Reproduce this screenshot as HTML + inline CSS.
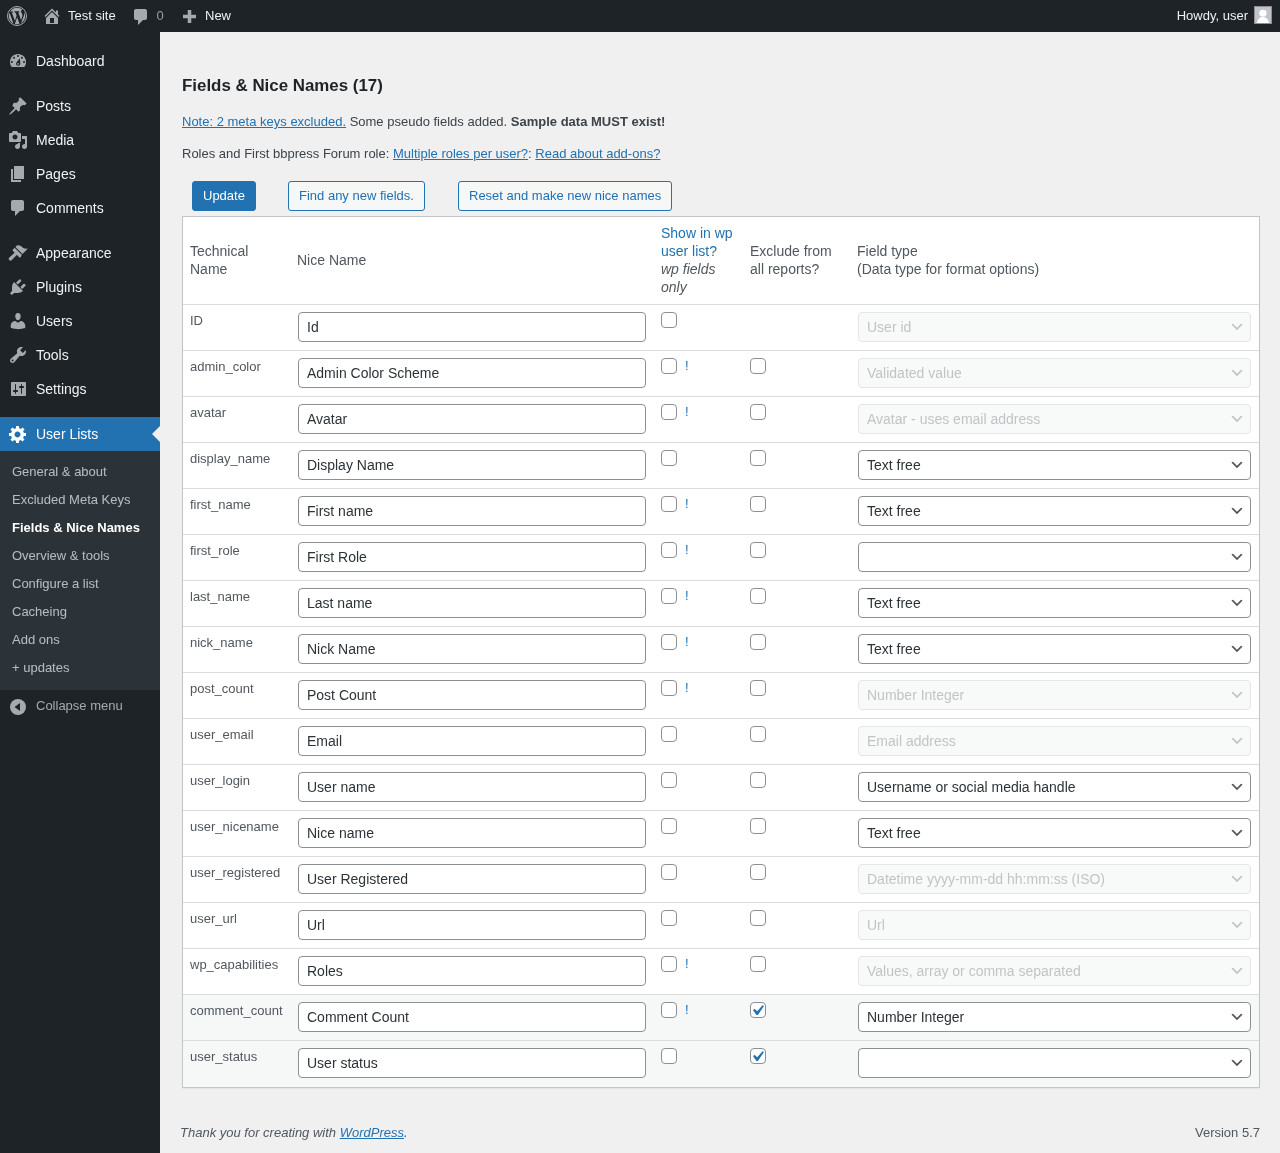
<!DOCTYPE html>
<html><head><meta charset="utf-8">
<style>
*{box-sizing:border-box;margin:0;padding:0}
html,body{width:1280px;height:1153px;overflow:hidden}
body{background:#f0f0f1;font-family:"Liberation Sans",sans-serif;font-size:13px;line-height:1.4;color:#3c434a;position:relative}
a{color:#2271b1;text-decoration:underline}
#bar{position:absolute;left:0;top:0;width:1280px;height:32px;background:#1d2327;color:#f0f0f1;font-size:13px;line-height:32px}
#bar .t{position:absolute;top:0;white-space:nowrap}
#bar svg{position:absolute}
#side{position:absolute;left:0;top:32px;width:160px;height:1121px;background:#1d2327}
.mi{position:absolute;left:0;width:160px;height:34px;color:#f0f0f1;font-size:14px;line-height:18px}
.mi .l{position:absolute;left:36px;top:8px;white-space:nowrap}
.mi svg{position:absolute;left:8px;top:7px}
.mi.cur{background:#2271b1;color:#fff}
#sub{position:absolute;left:0;width:160px;background:#2c3338}
.si{position:absolute;left:12px;color:rgba(240,246,252,.7);font-size:13px;line-height:18px;white-space:nowrap}
.si.b{color:#fff;font-weight:bold}
#main{position:absolute;left:160px;top:32px;width:1120px;height:1121px}
h2{position:absolute;left:22px;font-size:16.9px;font-weight:600;color:#1d2327;line-height:1.3;white-space:nowrap}
.p{position:absolute;left:22px;white-space:nowrap}
.btn{position:absolute;height:30px;border:1px solid #2271b1;border-radius:3px;background:#f6f7f7;color:#2271b1;font-size:13px;line-height:28px;padding:0 10px;white-space:nowrap}
.btn.pri{background:#2271b1;color:#fff}
#tbl{position:absolute;left:182px;top:216px;width:1078px;height:872px;background:#fff;border:1px solid #c3c4c7;box-shadow:0 1px 1px rgba(0,0,0,.04)}
.hd{position:absolute;white-space:nowrap;line-height:18px;font-size:14px;color:#50575e}
.row{position:absolute;left:0;width:1076px;height:46px;border-top:1px solid #dcdcde}
.row.gray{background:#f6f7f7;height:47px}
.tech{position:absolute;left:7px;top:7px;line-height:18px;font-size:13px;color:#50575e}
.inp{position:absolute;left:115px;top:7px;width:348px;height:30px;border:1px solid #8c8f94;border-radius:4px;background:#fff;font-size:14px;line-height:28px;padding-left:8px;color:#2c3338;white-space:nowrap}
.cb{position:absolute;top:7px;width:16px;height:16px;border:1px solid #8c8f94;border-radius:4px;background:#fff}
.cb1{left:478px}
.cb2{left:567px}
.tick{position:absolute;left:-4px;top:-3px}
.bang{position:absolute;left:502px;top:6px;color:#2271b1;font-size:13px;line-height:18px}
.sel{position:absolute;left:675px;top:7px;width:393px;height:30px;border:1px solid #8c8f94;border-radius:4px;background:#fff;font-size:14px;line-height:28px;padding-left:8px;color:#2c3338;white-space:nowrap}
.sel.dis{border-color:#dcdcde;background:#f6f7f7;color:#a7aaad;opacity:.7}
.chev{position:absolute;right:5px;top:5.8px}
#foot{position:absolute;left:180px;top:1123px;font-style:italic;color:#50575e;line-height:20px;white-space:nowrap}
#ver{position:absolute;right:20px;top:1123px;color:#50575e;line-height:20px}
</style></head><body>
<div id="wrap" style="position:absolute;left:0;top:0;width:1280px;height:1153px;will-change:transform">
<div id="bar">
 <svg style="left:7px;top:6px" width="20" height="20" viewBox="0 0 20 20"><circle cx="10" cy="10" r="9.500" fill="none" stroke="#a7aaad" stroke-width="1"/><path transform="translate(10 10) scale(.92) translate(-10 -10)" d="M7.780 15.370L4.370 6.220c.550-.020 1.170-.080 1.170-.080.500-.060.440-1.130-.060-1.110 0 0-1.450.110-2.370.110-.180 0-.370 0-.580-.010C4.120 2.690 6.870 1.110 10 1.110c2.330 0 4.450.870 6.050 2.340-.680-.110-1.650.390-1.650 1.580 0 .740.450 1.360.900 2.100.350.610.550 1.360.550 2.460 0 1.490-1.400 5-1.400 5l-3.030-8.370c.540-.020.820-.170.820-.170.500-.050.440-1.250-.060-1.220 0 0-1.440.120-2.380.120-.870 0-2.330-.120-2.330-.120-.500-.030-.560 1.200-.060 1.220l.920.080 1.260 3.410zM17.410 10c.240-.640.740-1.870.430-4.250.700 1.290 1.050 2.710 1.050 4.250 0 3.290-1.730 6.240-4.400 7.780.970-2.590 1.940-5.200 2.920-7.780zM6.100 18.090C3.120 16.650 1.110 13.530 1.110 10c0-1.300.230-2.480.720-3.590C3.250 10.300 4.670 14.200 6.100 18.090zm4.030-6.630l2.580 6.980c-.860.290-1.760.450-2.710.450-.790 0-1.570-.110-2.290-.330.810-2.380 1.620-4.740 2.420-7.100z" fill="#a7aaad"/></svg>
 <svg style="left:42px;top:6px" width="20" height="20" viewBox="0 0 20 20"><path d="M16 8.500l1.530 1.530-1.060 1.060L10 4.620l-6.470 6.470-1.060-1.060L10 2.500l4 4v-2h2v4zm-6-2.460l6 5.990V18H4v-5.970zM12 17v-5H8v5h4z" fill="#a7aaad" fill-rule="evenodd"/></svg>
 <div class="t" style="left:68px">Test site</div>
 <svg style="left:131px;top:7px" width="20" height="20" viewBox="0 0 20 20"><path d="M5 2h9c1.100 0 2 .900 2 2v7c0 1.100-.900 2-2 2h-2l-5 5v-5H5c-1.100 0-2-.900-2-2V4c0-1.100.900-2 2-2z" fill="#a7aaad"/></svg>
 <div class="t" style="left:156.5px;color:#9a9da1">0</div>
 <svg style="left:183px;top:10px" width="13" height="13" viewBox="0 0 13 13"><path d="M4.750 0h3.500v4.750H13v3.500H8.250V13h-3.500V8.250H0v-3.500h4.750z" fill="#a7aaad"/></svg>
 <div class="t" style="left:205px">New</div>
 <div class="t" style="right:32px">Howdy, user</div>
 <div style="position:absolute;left:1254px;top:6px;width:18px;height:18px;border:1px solid #8c8f94;background:#c3c4c7;overflow:hidden"><svg width="16" height="16" viewBox="0 0 16 16" style="position:absolute;left:0;top:0"><ellipse cx="7.9" cy="6.2" rx="3.7" ry="3.4" fill="#fff"/><path d="M1.800 16C2.300 12.600 4.600 10.100 7.900 9.700 11.200 10.100 13.500 12.600 14 16z" fill="#fff"/></svg></div>
</div>

<div id="side">
 <div class="mi" style="top:12px"><svg width="20" height="20" viewBox="0 0 20 20"><path d="M3.760 16h12.480c1.100-1.370 1.760-3.110 1.760-5 0-4.420-3.580-8-8-8s-8 3.580-8 8c0 1.890.660 3.630 1.760 5z" fill="#a7aaad"/><circle cx="3.900" cy="11" r="1" fill="#1d2327"/><circle cx="6" cy="6.700" r="1" fill="#1d2327"/><circle cx="10" cy="4.900" r="1" fill="#1d2327"/><circle cx="13.900" cy="6.700" r="1" fill="#1d2327"/><circle cx="16" cy="11" r="1" fill="#1d2327"/><path d="M11.800 7.300L12.300 13a2.100 2.100 0 11-4-1.200z" fill="#1d2327"/><circle cx="10" cy="12.900" r=".8" fill="#a7aaad"/></svg><span class="l">Dashboard</span></div>
 <div class="mi" style="top:57px"><svg width="20" height="20" viewBox="0 0 20 20"><path d="M10.440 3.020l1.820-1.820 6.360 6.350-1.830 1.820c-1.050-.68-2.480-.57-3.410.36l-.75.75c-.92.930-1.040 2.350-.35 3.410l-1.830 1.820-2.410-2.420-2.650 2.650c-.47.47-3.470 3.140-3.930 2.690-.46-.46 2.190-3.470 2.660-3.940l2.650-2.640-2.420-2.420L5.960 6.580c1.070.690 2.490.570 3.410-.350l.75-.75c.930-.930 1.050-2.360.320-3.460z" fill="#a7aaad"/></svg><span class="l">Posts</span></div>
 <div class="mi" style="top:91px"><svg width="20" height="20" viewBox="0 0 20 20"><path d="M13 11V4c0-.550-.450-1-1-1h-1.670L9 1H5L3.670 3H2c-.550 0-1 .450-1 1v7c0 .550.450 1 1 1h10c.550 0 1-.450 1-1zM7 4.500c1.380 0 2.500 1.120 2.500 2.500S8.380 9.500 7 9.500 4.500 8.380 4.500 7 5.620 4.500 7 4.500zM14 6h5v10.500c0 1.380-1.120 2.500-2.500 2.500S14 17.880 14 16.500s1.120-2.500 2.500-2.500c.170 0 .340.020.500.050V9h-3V6zm-4 8.050V13h2v3.500c0 1.380-1.120 2.500-2.500 2.500S7 17.880 7 16.500s1.120-2.500 2.500-2.500c.170 0 .340.020.500.050z" fill="#a7aaad" fill-rule="evenodd"/></svg><span class="l">Media</span></div>
 <div class="mi" style="top:125px"><svg width="20" height="20" viewBox="0 0 20 20"><path d="M6 15V2h10v13H6zm-1 1h8v2H3V5h2v11z" fill="#a7aaad"/></svg><span class="l">Pages</span></div>
 <div class="mi" style="top:159px"><svg width="20" height="20" viewBox="0 0 20 20"><path d="M5 2h9c1.100 0 2 .900 2 2v7c0 1.100-.900 2-2 2h-2l-5 5v-5H5c-1.100 0-2-.900-2-2V4c0-1.100.900-2 2-2z" fill="#a7aaad"/></svg><span class="l">Comments</span></div>
 <div class="mi" style="top:204px"><svg width="20" height="20" viewBox="0 0 20 20"><path d="M14.480 11.060L7.410 3.990l1.500-1.500c.500-.560 2.300-.470 3.510.320 1.210.800 1.430 1.280 2.910 2.100 1.180.640 2.450 1.260 4.660.630l-1.500 1.500z" fill="#a7aaad"/><path d="M13.770 11.770L6.700 4.700 4.930 6.470c-.390.390-.390 1.020 0 1.410l6.300 6.300c.390.390 1.020.390 1.410 0z" fill="#a7aaad"/><path d="M7.400 9.100L9.500 11.200L3.800 17.100A1.750 1.750 0 0 1 1.300 14.600Z" fill="#a7aaad"/></svg><span class="l">Appearance</span></div>
 <div class="mi" style="top:238px"><svg width="20" height="20" viewBox="0 0 20 20"><path d="M13.110 4.360L9.870 7.600 8 5.730l3.240-3.240c.350-.340 1.050-.200 1.560.310.500.500.650 1.210.310 1.560zm-8 1.770l.910-1.120 9.010 9.010-1.190.840c-.710.710-2.630 1.160-3.820 1.160H6.140L4.900 17.260c-.590.590-1.540.590-2.120 0-.590-.580-.590-1.530 0-2.120l1.240-1.240v-3.880c0-1.130.460-3.050 1.090-3.890zm7.260 3.970l3.240-3.240c.340-.350 1.050-.200 1.550.310.510.510.660 1.210.310 1.550l-3.240 3.250z" fill="#a7aaad"/></svg><span class="l">Plugins</span></div>
 <div class="mi" style="top:272px"><svg width="20" height="20" viewBox="0 0 20 20"><path d="M10 9.250c-2.270 0-2.730-3.440-2.730-3.440C7 4.020 7.820 2 9.970 2c2.160 0 2.980 2.020 2.710 3.810 0 0-.410 3.440-2.680 3.440zm0 2.570L12.720 10c2.390 0 4.520 2.330 4.520 4.530v2.490s-3.650 1.130-7.240 1.130c-3.650 0-7.240-1.130-7.240-1.130v-2.490c0-2.250 1.940-4.480 4.470-4.480z" fill="#a7aaad"/></svg><span class="l">Users</span></div>
 <div class="mi" style="top:306px"><svg width="20" height="20" viewBox="0 0 20 20"><path d="M16.680 9.770c-1.340 1.340-3.300 1.670-4.950.990l-5.410 6.520c-.990.990-2.590.990-3.580 0s-.990-2.590 0-3.570l6.520-5.420c-.680-1.650-.350-3.610.990-4.950 1.280-1.280 3.120-1.620 4.720-1.060l-2.890 2.890 2.820 2.820 2.860-2.870c.530 1.580.180 3.390-1.080 4.650zM3.810 16.210c.400.390 1.040.390 1.430 0 .400-.400.400-1.040 0-1.430-.390-.400-1.030-.400-1.430 0-.390.390-.390 1.030 0 1.430z" fill="#a7aaad" fill-rule="evenodd"/></svg><span class="l">Tools</span></div>
 <div class="mi" style="top:340px"><svg width="20" height="20" viewBox="0 0 20 20"><path d="M18 16V4c0-.550-.450-1-1-1H4c-.550 0-1 .450-1 1v12c0 .550.450 1 1 1h13c.550 0 1-.450 1-1zM8 11h1c.550 0 1 .450 1 1s-.450 1-1 1H8v1.500c0 .280-.220.500-.500.500s-.500-.220-.500-.500V13H6c-.550 0-1-.450-1-1s.450-1 1-1h1V5.500c0-.280.220-.500.500-.500s.500.220.500.500V11zm5-2h-1c-.550 0-1-.450-1-1s.450-1 1-1h1V5.500c0-.280.220-.500.500-.500s.500.220.500.500V7h1c.550 0 1 .450 1 1s-.450 1-1 1h-1v5.500c0 .280-.220.500-.500.500s-.500-.220-.500-.500V9z" fill="#a7aaad" fill-rule="evenodd"/></svg><span class="l">Settings</span></div>
 <div class="mi cur" style="top:385px"><svg width="20" height="20" viewBox="0 0 20 20"><path d="M18 12h-2.180c-.170.700-.440 1.350-.810 1.940l1.540 1.540-2.100 2.100-1.540-1.540c-.590.370-1.240.640-1.940.810V19H8v-2.180c-.700-.170-1.350-.440-1.940-.810l-1.540 1.540-2.100-2.100 1.540-1.540c-.370-.590-.640-1.240-.810-1.940H1V9h2.180c.170-.700.440-1.350.810-1.940L2.450 5.520l2.100-2.100 1.540 1.540c.590-.370 1.240-.640 1.940-.810V2h3v2.180c.700.170 1.350.440 1.940.810l1.540-1.540 2.100 2.100-1.540 1.540c.370.590.640 1.240.810 1.940H18v3zm-8.500 1.500c1.660 0 3-1.340 3-3s-1.340-3-3-3-3 1.340-3 3 1.340 3 3 3z" fill="#fff"/></svg><span class="l">User Lists</span>
  <svg style="left:152px;top:9px" width="8" height="16" viewBox="0 0 8 16"><path d="M8 0v16L0 8z" fill="#f0f0f1"/></svg></div>
 <div id="sub" style="top:419px;height:239px">
  <div class="si" style="top:12px">General &amp; about</div>
  <div class="si" style="top:40px">Excluded Meta Keys</div>
  <div class="si b" style="top:68px">Fields &amp; Nice Names</div>
  <div class="si" style="top:96px">Overview &amp; tools</div>
  <div class="si" style="top:124px">Configure a list</div>
  <div class="si" style="top:152px">Cacheing</div>
  <div class="si" style="top:180px">Add ons</div>
  <div class="si" style="top:208px">+ updates</div>
 </div>
 <div class="mi" style="top:657px;color:#a7aaad;font-size:13px"><svg style="top:8px" width="20" height="20" viewBox="0 0 20 20"><circle cx="10" cy="10" r="8" fill="#a7aaad"/><path d="M12 6v8L6.500 10z" fill="#1d2327"/></svg><span class="l">Collapse menu</span></div>
</div>

<h2 style="top:75px;left:182px">Fields &amp; Nice Names (17)</h2>
<div class="p" style="top:113px;left:182px"><a>Note: 2 meta keys excluded.</a> Some pseudo fields added. <b>Sample data MUST exist!</b></div>
<div class="p" style="top:145px;left:182px">Roles and First bbpress Forum role: <a>Multiple roles per user?</a>: <a>Read about add-ons?</a></div>
<div class="btn pri" style="left:192px;top:181px">Update</div>
<div class="btn" style="left:288px;top:181px">Find any new fields.</div>
<div class="btn" style="left:458px;top:181px">Reset and make new nice names</div>

<div id="tbl">
 <div class="hd" style="left:7px;top:25px">Technical<br>Name</div>
 <div class="hd" style="left:114px;top:34px">Nice Name</div>
 <div class="hd" style="left:478px;top:7px"><span style="color:#2271b1">Show in wp<br>user list?</span><br><i>wp fields<br>only</i></div>
 <div class="hd" style="left:567px;top:25px">Exclude from<br>all reports?</div>
 <div class="hd" style="left:674px;top:25px">Field type<br>(Data type for format options)</div>
<div class="row" style="top:87px"><div class="tech">ID</div><div class="inp">Id</div><div class="cb cb1"></div><div class="sel dis">User id<svg class="chev" width="16" height="16" viewBox="0 0 20 20"><path d="M5 6l5 5 5-5 2 1-7 7-7-7 2-1z" fill="#a7aaad"/></svg></div></div>
<div class="row" style="top:133px"><div class="tech">admin_color</div><div class="inp">Admin Color Scheme</div><div class="cb cb1"></div><div class="bang">!</div><div class="cb cb2"></div><div class="sel dis">Validated value<svg class="chev" width="16" height="16" viewBox="0 0 20 20"><path d="M5 6l5 5 5-5 2 1-7 7-7-7 2-1z" fill="#a7aaad"/></svg></div></div>
<div class="row" style="top:179px"><div class="tech">avatar</div><div class="inp">Avatar</div><div class="cb cb1"></div><div class="bang">!</div><div class="cb cb2"></div><div class="sel dis">Avatar - uses email address<svg class="chev" width="16" height="16" viewBox="0 0 20 20"><path d="M5 6l5 5 5-5 2 1-7 7-7-7 2-1z" fill="#a7aaad"/></svg></div></div>
<div class="row" style="top:225px"><div class="tech">display_name</div><div class="inp">Display Name</div><div class="cb cb1"></div><div class="cb cb2"></div><div class="sel">Text free<svg class="chev" width="16" height="16" viewBox="0 0 20 20"><path d="M5 6l5 5 5-5 2 1-7 7-7-7 2-1z" fill="#555"/></svg></div></div>
<div class="row" style="top:271px"><div class="tech">first_name</div><div class="inp">First name</div><div class="cb cb1"></div><div class="bang">!</div><div class="cb cb2"></div><div class="sel">Text free<svg class="chev" width="16" height="16" viewBox="0 0 20 20"><path d="M5 6l5 5 5-5 2 1-7 7-7-7 2-1z" fill="#555"/></svg></div></div>
<div class="row" style="top:317px"><div class="tech">first_role</div><div class="inp">First Role</div><div class="cb cb1"></div><div class="bang">!</div><div class="cb cb2"></div><div class="sel"><svg class="chev" width="16" height="16" viewBox="0 0 20 20"><path d="M5 6l5 5 5-5 2 1-7 7-7-7 2-1z" fill="#555"/></svg></div></div>
<div class="row" style="top:363px"><div class="tech">last_name</div><div class="inp">Last name</div><div class="cb cb1"></div><div class="bang">!</div><div class="cb cb2"></div><div class="sel">Text free<svg class="chev" width="16" height="16" viewBox="0 0 20 20"><path d="M5 6l5 5 5-5 2 1-7 7-7-7 2-1z" fill="#555"/></svg></div></div>
<div class="row" style="top:409px"><div class="tech">nick_name</div><div class="inp">Nick Name</div><div class="cb cb1"></div><div class="bang">!</div><div class="cb cb2"></div><div class="sel">Text free<svg class="chev" width="16" height="16" viewBox="0 0 20 20"><path d="M5 6l5 5 5-5 2 1-7 7-7-7 2-1z" fill="#555"/></svg></div></div>
<div class="row" style="top:455px"><div class="tech">post_count</div><div class="inp">Post Count</div><div class="cb cb1"></div><div class="bang">!</div><div class="cb cb2"></div><div class="sel dis">Number Integer<svg class="chev" width="16" height="16" viewBox="0 0 20 20"><path d="M5 6l5 5 5-5 2 1-7 7-7-7 2-1z" fill="#a7aaad"/></svg></div></div>
<div class="row" style="top:501px"><div class="tech">user_email</div><div class="inp">Email</div><div class="cb cb1"></div><div class="cb cb2"></div><div class="sel dis">Email address<svg class="chev" width="16" height="16" viewBox="0 0 20 20"><path d="M5 6l5 5 5-5 2 1-7 7-7-7 2-1z" fill="#a7aaad"/></svg></div></div>
<div class="row" style="top:547px"><div class="tech">user_login</div><div class="inp">User name</div><div class="cb cb1"></div><div class="cb cb2"></div><div class="sel">Username or social media handle<svg class="chev" width="16" height="16" viewBox="0 0 20 20"><path d="M5 6l5 5 5-5 2 1-7 7-7-7 2-1z" fill="#555"/></svg></div></div>
<div class="row" style="top:593px"><div class="tech">user_nicename</div><div class="inp">Nice name</div><div class="cb cb1"></div><div class="cb cb2"></div><div class="sel">Text free<svg class="chev" width="16" height="16" viewBox="0 0 20 20"><path d="M5 6l5 5 5-5 2 1-7 7-7-7 2-1z" fill="#555"/></svg></div></div>
<div class="row" style="top:639px"><div class="tech">user_registered</div><div class="inp">User Registered</div><div class="cb cb1"></div><div class="cb cb2"></div><div class="sel dis">Datetime yyyy-mm-dd hh:mm:ss (ISO)<svg class="chev" width="16" height="16" viewBox="0 0 20 20"><path d="M5 6l5 5 5-5 2 1-7 7-7-7 2-1z" fill="#a7aaad"/></svg></div></div>
<div class="row" style="top:685px"><div class="tech">user_url</div><div class="inp">Url</div><div class="cb cb1"></div><div class="cb cb2"></div><div class="sel dis">Url<svg class="chev" width="16" height="16" viewBox="0 0 20 20"><path d="M5 6l5 5 5-5 2 1-7 7-7-7 2-1z" fill="#a7aaad"/></svg></div></div>
<div class="row" style="top:731px"><div class="tech">wp_capabilities</div><div class="inp">Roles</div><div class="cb cb1"></div><div class="bang">!</div><div class="cb cb2"></div><div class="sel dis">Values, array or comma separated<svg class="chev" width="16" height="16" viewBox="0 0 20 20"><path d="M5 6l5 5 5-5 2 1-7 7-7-7 2-1z" fill="#a7aaad"/></svg></div></div>
<div class="row gray" style="top:777px"><div class="tech">comment_count</div><div class="inp">Comment Count</div><div class="cb cb1"></div><div class="bang">!</div><div class="cb cb2"><svg class="tick" width="21" height="21" viewBox="0 0 20 20"><path d="M14.83 4.89l1.34.94-5.81 8.38H9.02L5.78 9.67l1.34-1.25 2.57 2.4z" fill="#2271b1"/></svg></div><div class="sel">Number Integer<svg class="chev" width="16" height="16" viewBox="0 0 20 20"><path d="M5 6l5 5 5-5 2 1-7 7-7-7 2-1z" fill="#555"/></svg></div></div>
<div class="row gray" style="top:823px"><div class="tech">user_status</div><div class="inp">User status</div><div class="cb cb1"></div><div class="cb cb2"><svg class="tick" width="21" height="21" viewBox="0 0 20 20"><path d="M14.83 4.89l1.34.94-5.81 8.38H9.02L5.78 9.67l1.34-1.25 2.57 2.4z" fill="#2271b1"/></svg></div><div class="sel"><svg class="chev" width="16" height="16" viewBox="0 0 20 20"><path d="M5 6l5 5 5-5 2 1-7 7-7-7 2-1z" fill="#555"/></svg></div></div>
</div>

<div id="foot">Thank you for creating with <a>WordPress</a>.</div>
<div id="ver">Version 5.7</div>
</div>
</body></html>
